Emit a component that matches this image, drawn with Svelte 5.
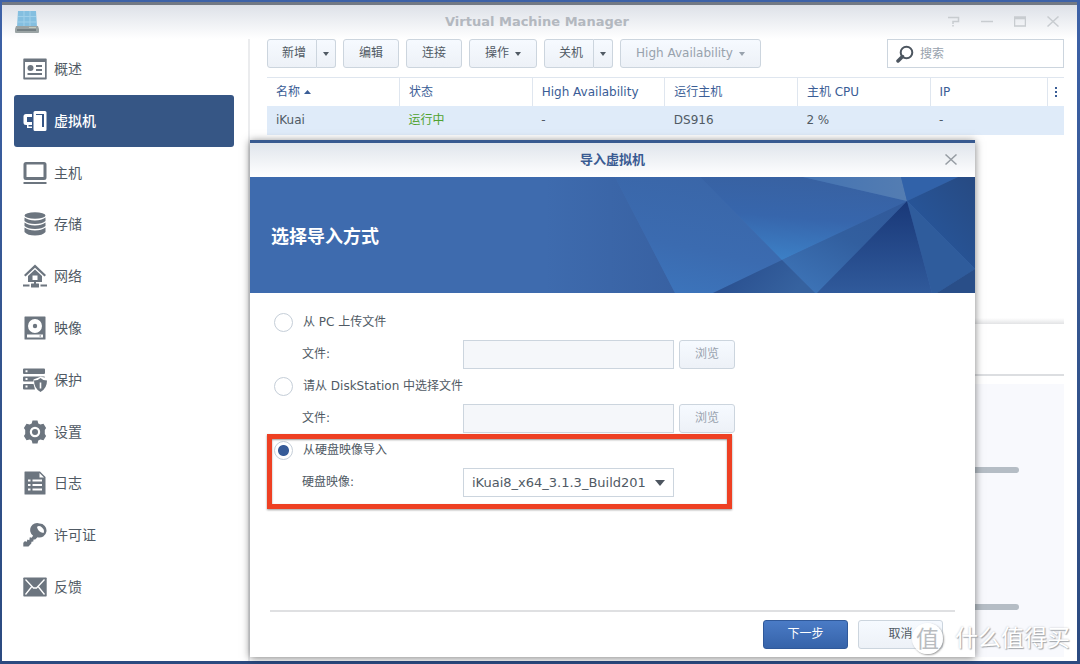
<script lang="ts">
	interface NavItem {
		id: string;
		label: string;
	}

	const navItems: NavItem[] = [
		{ id: "overview", label: "概述" },
		{ id: "vm", label: "虚拟机" },
		{ id: "host", label: "主机" },
		{ id: "storage", label: "存储" },
		{ id: "network", label: "网络" },
		{ id: "image", label: "映像" },
		{ id: "protection", label: "保护" },
		{ id: "settings", label: "设置" },
		{ id: "log", label: "日志" },
		{ id: "license", label: "许可证" },
		{ id: "feedback", label: "反馈" }
	];

	const machines = [
		{ name: "iKuai", status: "运行中", ha: "-", host: "DS916", cpu: "2 %", ip: "-" }
	];

	let active = $state("vm");
	let source = $state("image");
	let diskImage = $state("iKuai8_x64_3.1.3_Build201");
	let search = $state("");
</script>

<svelte:head>
	<title>Virtual Machine Manager</title>
</svelte:head>

{#snippet caret()}
	<svg class="caret" viewBox="0 0 6 4" aria-hidden="true"><path d="M0 0h6L3 4z" /></svg>
{/snippet}

{#snippet navIcon(id: string)}
	<svg class="navIcon" viewBox="0 0 24 24" aria-hidden="true">
		{#if id === "overview"}
			<path fill-rule="evenodd" d="M1 1.500h22a.7.7 0 0 1 .7.7v19.600a.7.7 0 0 1-.7.7H1a.7.7 0 0 1-.7-.7V2.200a.7.7 0 0 1 .7-.7zM2 5v15.500h20V5z" />
			<circle cx="7.500" cy="11" r="3" />
			<path d="M13 8h6v2h-6zM13 12h6v2h-6zM4.500 16h14.500v2H4.500z" />
		{:else if id === "vm"}
			<path d="M9 5H3Q.5 5 .5 7.500v6Q.5 16 3 16h1v3h5v-1.500H5.500V16H9v-3H4V8h5z" />
			<path fill-rule="evenodd" d="M12 2h10q1.500 0 1.500 1.500v17q0 1.500-1.500 1.500H12q-1.500 0-1.500-1.500v-17Q10.500 2 12 2zM13 5v1h6v12h2V5z" />
		{:else if id === "host"}
			<path fill-rule="evenodd" d="M3 1h18q2.500 0 2.500 2.500v13Q23.500 19 21 19H3Q.5 19 .5 16.500v-13Q.5 1 3 1zM3.500 3.500v12.500h17V3.500z" />
			<path d="M.5 21h23v2H.5z" />
		{:else if id === "storage"}
			<ellipse cx="12" cy="3.500" rx="10.500" ry="3.200" />
			<path d="M1.500 5.500q4 3 10.500 3t10.500-3v3.500q-3 3-10.500 3T1.500 9zM1.500 10.500q4 3 10.500 3t10.500-3V14q-3 3-10.500 3T1.500 14zM1.500 15.500q4 3 10.500 3t10.500-3V20q-3 3.500-10.500 3.500T1.500 20z" />
		{:else if id === "network"}
			<path d="M12 .5 23 11l-1.500 1.500L12 3.700l-9.500 8.800L1 11z" />
			<path fill-rule="evenodd" d="m12 5.500 7 6.500v6H5v-6zM9.500 11.500V16h5v-4.500z" />
			<path d="M11 18h2v1.500h2.500q.5 0 .5.5v3q0 .5-.5.500h-7q-.5 0-.5-.5v-3q0-.5.5-.500H11zM0 20.500h6.500v2H0zM17.500 20.500H24v2h-6.500z" />
		{:else if id === "image"}
			<path fill-rule="evenodd" d="M2 .5h20q.5 0 .5.5v22q0 .5-.5.500H2q-.5 0-.5-.5V1q0-.5.5-.500zM12 3a7 7 0 1 0 0 14 7 7 0 0 0 0-14zM4 18.500v3h16v-3zM16.500 19.500h1.500v1h-1.500z" />
			<circle cx="12" cy="10" r="2.200" />
		{:else if id === "protection"}
			<path fill-rule="evenodd" d="M1 .5h20q1 0 1 1v3.500q0 1-1 1H1Q0 6 0 5V1.500q0-1 1-1zM2.500 2.200v2h2v-2z" />
			<path fill-rule="evenodd" d="M1 8.500h20q1 0 1 1l-4.500-.8-7 2.800v2H1q-1 0-1-1v-3q0-1 1-1zM2.500 10v2h2v-2z" />
			<path fill-rule="evenodd" d="M1 16h9.500l1.500 5.500H1q-1 0-1-1V17q0-1 1-1zM2.500 17.500v2h2v-2z" />
			<path fill-rule="evenodd" d="M17.500 10q2.500 2.500 6.500 2.500 0 8-6.500 11.500Q11 20.500 11 12.500q4 0 6.500-2.500zM16.700 14.500v6h1.600v-6z" />
		{:else if id === "settings"}
			<path fill-rule="evenodd" d="M9.500.5h5l.8 3 2 1.100 3.200-.9 2.600 4.300-1.300 2.100v3.800l1.300 2.100-2.600 4.300-3.200-.9-2 1.100-.8 3h-5l-.8-3-2-1.100-3.200.9L.9 16l1.300-2.100v-3.800L.9 8l2.600-4.300 3.200.9 2-1.100zM12 6.800a5.200 5.200 0 1 0 0 10.400 5.200 5.200 0 0 0 0-10.400z" />
			<circle cx="12" cy="12" r="3" />
		{:else if id === "log"}
			<path fill-rule="evenodd" d="M2 .5h15L22.500 6v17q0 .5-.5.500H2q-.5 0-.5-.5V1q0-.5.5-.500zM16.500 2v4.500H21zM5 8.500v2h2.500v-2zM9.500 8.500v2H19v-2zM5 13v2h2.500v-2zM9.500 13v2H19v-2zM5 17.500v2h2.500v-2zM9.500 17.500v2H19v-2z" />
		{:else if id === "license"}
			<path fill-rule="evenodd" d="M16.500.5a7 7 0 1 1-2 13.700l-2.300 2.200-1.700.2-.2 1.900-1.800.2-.2 1.900L5.500 23.500H.3v-3.800l1.700-1.800 1.500 1.200 1-2.700 1.800.9.500-3 1.800.5 1.500-2A7 7 0 0 1 16.500.5zM14 4q2-2 5 .5t1.500 5.500q-3-.5-4.500-2T14 4z" />
		{:else}
			<path d="M1 2.500h22q.7 0 .7.7v17.600q0 .7-.7.700H1q-.7 0-.7-.7V3.200q0-.7.7-.700z" />
			<path class="envelope" d="m2.500 4.500 8 8.500h3l8-8.500M8.500 12 2.500 19.500M15.500 12l6 7.500" />
		{/if}
	</svg>
{/snippet}

<div class="desktop">
	<div class="window">
		<header class="titleBar">
			<svg class="appIcon" viewBox="0 0 24 24" aria-hidden="true">
				<path fill="#84bfe0" d="M3 1h18l1 16H2z" />
				<path stroke="#a0d0ea" d="M3 6.500h18M3 12h18M9 1v16M15 1v16" />
				<path fill="#9aa3a4" d="M1 16h22l1 3v3q0 1-1 1H1q-1 0-1-1v-3z" />
				<path fill="#737e82" d="M2 19h19v2H2z" />
				<path fill="#c2cbbd" d="M14 17h7v1h-7z" />
			</svg>
			<h1>Virtual Machine Manager</h1>
			<div class="windowControls">
				<button aria-label="帮助">
					<svg viewBox="0 0 12 12"><path d="M0 1.500h10.500v4H5V8M5 9v1.500" /></svg>
				</button>
				<button aria-label="最小化">
					<svg viewBox="0 0 12 12"><path d="M0 5.500h12" /></svg>
				</button>
				<button aria-label="最大化">
					<svg viewBox="0 0 12 12"><path d="M.5 1h11v9H.5zM.5 2.500h11" /></svg>
				</button>
				<button aria-label="关闭">
					<svg viewBox="0 0 12 12"><path d="m.5.5 11 10M11.500.5l-11 10" /></svg>
				</button>
			</div>
		</header>

		<div class="columns">
			<nav class="sidebar">
				{#each navItems as item}
					<button class="navItem" class:selected={active === item.id} onclick={() => (active = item.id)}>
						{@render navIcon(item.id)}
						<span>{item.label}</span>
					</button>
				{/each}
			</nav>

			<main class="content">
				<div class="toolbar">
					<div class="split">
						<button class="btn">新增</button>
						<button class="btn drop" aria-label="更多新增选项">{@render caret()}</button>
					</div>
					<button class="btn">编辑</button>
					<button class="btn">连接</button>
					<button class="btn">操作 {@render caret()}</button>
					<div class="split">
						<button class="btn">关机</button>
						<button class="btn drop" aria-label="更多关机选项">{@render caret()}</button>
					</div>
					<button class="btn" disabled>High Availability {@render caret()}</button>
					<label class="search">
						<svg viewBox="0 0 18 18" aria-hidden="true">
							<circle cx="10.500" cy="7.500" r="5.800" />
							<path d="m6.500 11.500-4.500 4.500" />
						</svg>
						<input type="text" placeholder="搜索" aria-label="搜索" bind:value={search} />
					</label>
				</div>

				<table>
					<colgroup>
						<col /><col /><col /><col /><col />
						<col class="ipCol" />
						<col class="menuCol" />
					</colgroup>
					<thead>
						<tr>
							<th>名称 <svg class="sort" viewBox="0 0 7 4" aria-hidden="true"><path d="M0 4h7L3.500 0z" /></svg></th>
							<th>状态</th>
							<th>High Availability</th>
							<th>运行主机</th>
							<th>主机 CPU</th>
							<th>IP</th>
							<th class="menuCell">
								<svg viewBox="0 0 2 10" aria-hidden="true"><path d="M0 0h2v2H0zM0 4h2v2H0zM0 8h2v2H0z" /></svg>
							</th>
						</tr>
					</thead>
					<tbody>
						{#each machines as vm}
							<tr>
								<td>{vm.name}</td>
								<td class="running">{vm.status}</td>
								<td>{vm.ha}</td>
								<td>{vm.host}</td>
								<td>{vm.cpu}</td>
								<td>{vm.ip}</td>
								<td></td>
							</tr>
						{/each}
					</tbody>
				</table>

				<section class="details">
					<div class="splitter"></div>
					<div class="detailTabs"></div>
					<div class="usage">
						<div class="track"></div>
						<div class="track"></div>
					</div>
				</section>

				<!-- Import wizard -->
				<div class="dialog" role="dialog" aria-labelledby="wizardTitle">
					<div class="dialogHeader">
						<h2 id="wizardTitle">导入虚拟机</h2>
						<button class="dialogClose" aria-label="关闭">
							<svg viewBox="0 0 12 12"><path d="m.5.5 11 10M11.500.5l-11 10" /></svg>
						</button>
					</div>

					<div class="banner">
						<svg class="facets" viewBox="0 0 725 116" preserveAspectRatio="xMaxYMid slice" aria-hidden="true">
							<defs>
								<linearGradient id="fadeLeft"><stop offset="0.300" stop-color="#3e6bae" /><stop offset="1" stop-color="#3861a2" /></linearGradient>
								<linearGradient id="mid" x1="0.600" y1="0" x2="0.300" y2="1"><stop offset="0" stop-color="#3a66a8" /><stop offset="0.600" stop-color="#3b6bb0" /><stop offset="1" stop-color="#3c74bb" /></linearGradient>
								<linearGradient id="glow" x1="0.600" y1="0" x2="0.400" y2="1"><stop offset="0" stop-color="#3861a1" /><stop offset="0.500" stop-color="#3766ac" /><stop offset="1" stop-color="#3c80c6" /></linearGradient>
								<linearGradient id="pale"><stop offset="0" stop-color="#4473b2" /><stop offset="1" stop-color="#547db2" /></linearGradient>
								<linearGradient id="dark" x1="0" y1="0" x2="0" y2="1"><stop offset="0" stop-color="#193878" /><stop offset="1" stop-color="#305a9b" /></linearGradient>
								<linearGradient id="low" x1="0" y1="0" x2="1" y2="0.300"><stop offset="0" stop-color="#264a8b" /><stop offset="1" stop-color="#36629f" /></linearGradient>
								<linearGradient id="wing" x1="1" y1="0" x2="0.300" y2="1"><stop offset="0" stop-color="#31599a" /><stop offset="0.500" stop-color="#325f9f" /><stop offset="1" stop-color="#3c72b5" /></linearGradient>
								<linearGradient id="edge" x1="1" y1="0" x2="0" y2="1"><stop offset="0" stop-color="#274a82" /><stop offset="1" stop-color="#275aa3" /></linearGradient>
							</defs>
							<path fill="url(#fadeLeft)" d="M240 0h125l60 116H240z" />
							<path fill="url(#mid)" d="M365 0h85l82 83-69 33h-38z" />
							<path fill="url(#glow)" d="M450 0h103l104 24-125 59z" />
							<path fill="url(#pale)" d="M553 0h98l6 24z" />
							<path fill="#3162a9" d="M651 0h57l-51 24z" />
							<path fill="url(#edge)" d="M708 0h17v92l-68-68z" />
							<path fill="#2f5c9c" d="m657 24 68 68-38 24h-5z" />
							<path fill="#294e88" d="M725 92v24h-38z" />
							<path fill="url(#wing)" d="m657 24-90 92h-2l-33-33z" />
							<path fill="url(#dark)" d="m657 24 25 92H567z" />
							<path fill="url(#low)" d="m532 83 33 33H463z" />
						</svg>
						<h3>选择导入方式</h3>
					</div>

					<form class="options" onsubmit={(e) => e.preventDefault()}>
						<div class="option">
							<div class="row">
								<input type="radio" id="srcPc" value="pc" bind:group={source} />
								<label for="srcPc">从 PC 上传文件</label>
							</div>
							<div class="row field">
								<label for="pcFile">文件:</label>
								<input type="text" id="pcFile" disabled />
								<button type="button" class="btn" disabled>浏览</button>
							</div>
						</div>
						<div class="option">
							<div class="row">
								<input type="radio" id="srcNas" value="nas" bind:group={source} />
								<label for="srcNas">请从 DiskStation 中选择文件</label>
							</div>
							<div class="row field">
								<label for="nasFile">文件:</label>
								<input type="text" id="nasFile" disabled />
								<button type="button" class="btn" disabled>浏览</button>
							</div>
						</div>
						<div class="option highlighted">
							<div class="row">
								<input type="radio" id="srcImage" value="image" bind:group={source} />
								<label for="srcImage">从硬盘映像导入</label>
							</div>
							<div class="row field">
								<label for="diskImage">硬盘映像:</label>
								<div class="selectBox">
									<select id="diskImage" bind:value={diskImage}>
										<option>iKuai8_x64_3.1.3_Build201</option>
									</select>
									<svg viewBox="0 0 10 6" aria-hidden="true"><path d="M0 0h10L5 6z" /></svg>
								</div>
							</div>
						</div>
					</form>

					<footer class="dialogFooter">
						<button class="btn primary">下一步</button>
						<button class="btn cancel">取消</button>
					</footer>
				</div>
			</main>
		</div>
	</div>

	<div class="watermark">
		<span class="seal">值</span>
		<span>什么值得买</span>
	</div>
</div>

<style>
	:global(body) {
		margin: 0;
	}

	.desktop {
		position: relative;
		box-sizing: border-box;
		min-height: 100vh;
		padding: 2px 3px 3px 2px;
		display: flex;
		background: linear-gradient(#3d62a8, #34558f 50%, #2b4a80);
		color: #505a64;
		font-family: "DejaVu Sans", "Noto Sans CJK SC", sans-serif;
		font-size: 12px;
		line-height: 16px;
		overflow: hidden;
	}

	button,
	input,
	select {
		box-sizing: border-box;
		margin: 0;
		font: inherit;
		color: inherit;
	}

	button {
		padding: 0;
		border: none;
		background: none;
		cursor: pointer;
	}

	svg {
		display: block;
		flex: none;
	}

	.window {
		flex: 1;
		min-width: 0;
		display: flex;
		flex-direction: column;
		border-top: 3px solid #727984;
		background: white;
	}

	/* title bar */
	.titleBar {
		display: grid;
		grid-template-columns: 1fr auto 1fr;
		align-items: center;
		height: 34px;
		padding: 0 18px 0 13px;
		background: linear-gradient(#dde1e8, #fff);
	}

	.titleBar h1 {
		margin: 0;
		font-size: 13px;
		font-weight: bold;
		color: #b3b8bf;
	}

	.appIcon {
		width: 24px;
		height: 24px;
	}

	.windowControls {
		display: flex;
		justify-content: flex-end;
		gap: 21px;
	}

	.windowControls svg,
	.dialogClose svg {
		width: 12px;
		height: 12px;
		fill: none;
		stroke: #c8ccd0;
		stroke-width: 1.5;
	}

	.columns {
		flex: 1;
		display: flex;
	}

	/* sidebar */
	.sidebar {
		box-sizing: border-box;
		width: 248px;
		flex: none;
		display: grid;
		grid-auto-rows: 1fr;
		padding: 4px 14px 48px 12px;
		border-right: 2px solid #ebecee;
	}

	.navItem {
		display: flex;
		align-items: center;
		gap: 7px;
		padding: 0 9px;
		border-radius: 3px;
		font-size: 14px;
		text-align: left;
	}

	.navItem.selected {
		background: #365685;
		color: white;
		font-weight: 500;
	}

	.navIcon {
		width: 24px;
		height: 24px;
		fill: #6c757f;
	}

	.selected .navIcon {
		fill: white;
	}

	.envelope {
		fill: none;
		stroke: white;
		stroke-width: 1.3;
	}

	/* toolbar */
	.content {
		position: relative;
		flex: 1;
		min-width: 0;
		display: flex;
		flex-direction: column;
		padding: 0 13px 4px 17px;
	}

	.toolbar {
		display: flex;
		gap: 7px;
	}

	.btn {
		display: flex;
		align-items: center;
		justify-content: center;
		gap: 6px;
		height: 29px;
		padding: 0 15px;
		border: 1px solid #ccd5de;
		border-radius: 3px;
		background: linear-gradient(#f6faff, #edf1f7);
		line-height: 17px;
		white-space: nowrap;
	}

	.btn:disabled {
		color: #98a2ad;
		cursor: default;
	}

	.caret {
		width: 6px;
		height: 4px;
		fill: currentColor;
	}

	.split {
		display: flex;
	}

	.split .btn:first-child {
		padding: 0 10px 0 14px;
		border-radius: 3px 0 0 3px;
	}

	.split .drop {
		padding: 0 6px;
		border-left: none;
		border-radius: 0 3px 3px 0;
	}

	.search {
		box-sizing: border-box;
		display: flex;
		align-items: center;
		gap: 6px;
		width: 177px;
		height: 29px;
		margin-left: auto;
		padding: 0 8px;
		border: 1px solid #ccd5de;
	}

	.search svg {
		width: 18px;
		height: 18px;
		fill: none;
		stroke: #4c555f;
		stroke-width: 2;
	}

	.search path {
		stroke-width: 3.5;
		stroke-linecap: round;
	}

	.search input {
		flex: 1;
		min-width: 0;
		border: none;
		outline: none;
		padding: 0;
	}

	.search input::placeholder {
		color: #98a2ad;
	}

	/* machine list */
	table {
		width: 100%;
		margin-top: 9px;
		border-collapse: collapse;
		table-layout: fixed;
	}

	.ipCol {
		width: 117px;
	}

	.menuCol {
		width: 17px;
	}

	th,
	td {
		box-sizing: border-box;
		height: 28px;
		padding: 0 9px;
		font-weight: normal;
		text-align: left;
		white-space: nowrap;
	}

	th {
		border-top: 1px solid #dfe6ef;
		border-right: 1px solid #dfe6ef;
		color: #3a5d96;
	}

	th:last-child {
		border-right: none;
	}

	td {
		height: 29px;
		background: #dfebf9;
	}

	td.running {
		color: #4fa22f;
	}

	.sort {
		display: inline-block;
		width: 7px;
		height: 4px;
		fill: #3a5d96;
		vertical-align: middle;
	}

	th.menuCell {
		padding: 0 7px;
	}

	.menuCell svg {
		width: 2px;
		height: 10px;
		fill: #3a5d96;
	}

	/* details */
	.details {
		flex: 1;
		display: flex;
		flex-direction: column;
		margin-top: 183px;
	}

	.splitter {
		height: 6px;
		background: linear-gradient(#fff, #e2e3e5);
	}

	.detailTabs {
		height: 50px;
		border-bottom: 2px solid #dcdee1;
	}

	.usage {
		flex: 1;
		display: flex;
		flex-direction: column;
		gap: 131px;
		margin-top: 8px;
		padding: 83px 45px 0;
		background: #f8f9fd;
	}

	.track {
		height: 6px;
		border-radius: 3px;
		background: #b5bdc5;
	}

	/* wizard */
	.dialog {
		position: absolute;
		top: 101px;
		bottom: 4px;
		left: 0;
		width: 725px;
		max-width: 100%;
		display: flex;
		flex-direction: column;
		box-sizing: border-box;
		border-top: 3px solid #385a90;
		background: white;
		box-shadow: 0 1px 8px rgba(0, 0, 0, 0.5);
	}

	.dialogHeader {
		display: grid;
		grid-template-columns: 1fr auto 1fr;
		align-items: center;
		height: 34px;
		padding: 0 18px;
		background: linear-gradient(#e0e5ec, #fff);
	}

	.dialogHeader h2 {
		grid-column: 2;
		margin: 0;
		font-size: 13px;
		font-weight: bold;
		color: #3a5b92;
	}

	.dialogClose {
		justify-self: end;
	}

	.dialogClose svg {
		stroke: #969ca3;
	}

	.banner {
		position: relative;
		display: flex;
		align-items: center;
		height: 116px;
		padding: 0 21px;
		background: #3e6bae;
	}

	.facets {
		position: absolute;
		inset: 0;
		width: 100%;
		height: 100%;
	}

	.banner h3 {
		position: relative;
		margin: 0;
		font-size: 18px;
		font-weight: bold;
		line-height: normal;
		color: white;
	}

	.options {
		flex: 1;
		padding: 13px 24px 0;
		line-height: 17px;
	}

	.option {
		position: relative;
	}

	/* red frame drawn over the chosen option */
	.highlighted::after {
		content: "";
		position: absolute;
		top: 0;
		left: -7px;
		width: 455px;
		height: 65px;
		border: 5px solid #ee4023;
		box-shadow: 0 1px 2px rgba(0, 0, 0, 0.4), inset 0 1px 2px rgba(0, 0, 0, 0.4);
		pointer-events: none;
	}

	.row {
		display: flex;
		align-items: center;
		height: 32px;
	}

	.row input[type="radio"] {
		appearance: none;
		width: 19px;
		height: 19px;
		margin-right: 10px;
		border: 1px solid #c5ced8;
		border-radius: 50%;
		background: white;
	}

	.row input[type="radio"]:checked {
		background: radial-gradient(circle, #365b98 5px, #fff 6px);
	}

	.field {
		padding-left: 28px;
	}

	.field label {
		width: 161px;
	}

	.field input,
	.selectBox {
		width: 211px;
		height: 29px;
	}

	.field input {
		margin-right: 5px;
		border: 1px solid #ccd5de;
		background: #f5f7fa;
	}

	.selectBox {
		position: relative;
	}

	.selectBox select {
		appearance: none;
		width: 100%;
		height: 100%;
		padding: 0 8px;
		border: 1px solid #ccd5de;
		border-radius: 0;
		background: white;
		font-size: 13px;
	}

	.selectBox svg {
		position: absolute;
		top: 12px;
		right: 9px;
		width: 10px;
		height: 6px;
		fill: #4c555f;
		pointer-events: none;
	}

	.dialogFooter {
		display: flex;
		justify-content: flex-end;
		gap: 10px;
		margin: 0 20px;
		padding: 8px 12px;
		border-top: 2px solid #dfe0e2;
	}

	.primary,
	.cancel {
		width: 85px;
	}

	.primary {
		border-color: #30599a;
		background: linear-gradient(#4a7bc6, #3663a9);
		color: white;
	}

	.watermark {
		position: absolute;
		right: 10px;
		bottom: 10px;
		display: flex;
		align-items: center;
		gap: 12px;
		font-size: 23px;
		line-height: 32px;
		color: white;
		text-shadow: 1px 1px 1px #a2a6ab, 0 0 2px #c0c3c7;
		pointer-events: none;
	}

	.seal {
		width: 31px;
		height: 31px;
		border-radius: 50%;
		background: rgba(255, 255, 255, 0.9);
		box-shadow: 1px 1px 2px #999;
		text-align: center;
		color: #b9bcc0;
		text-shadow: none;
	}
</style>
